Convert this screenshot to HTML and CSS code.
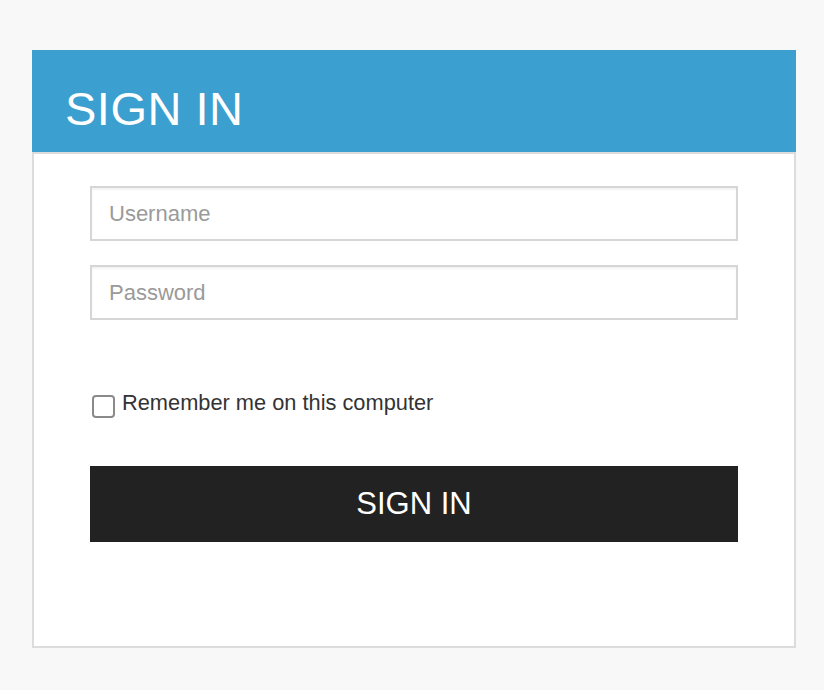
FILE: index.html
```html
<!DOCTYPE html>
<html>
<head>
<meta charset="utf-8">
<link rel="stylesheet" href="styles.css">
</head>
<body>
<div class="card">
  <div class="card-header"><h1 class="title">SIGN IN</h1></div>
  <form class="card-body">
    <input class="field" type="text" placeholder="Username">
    <input class="field" type="password" placeholder="Password">
    <label class="remember"><input class="check" type="checkbox"><span>Remember me on this computer</span></label>
    <button class="submit" type="button">SIGN IN</button>
  </form>
</div>
</body>
</html>
```
FILE: styles.css
```css
html, body {
  margin: 0;
  padding: 0;
}
body {
  background: #f8f8f8;
  font-family: "Liberation Sans", Arial, sans-serif;
  padding: 50px 0 0 32px;
}
.card {
  width: 764px;
}
.card-header {
  background: #3b9fd0;
  padding: 35px 33px 20px;
}
.title {
  margin: 0;
  font-size: 47px;
  line-height: 47px;
  letter-spacing: 0.5px;
  font-weight: normal;
  color: #fff;
}
.card-body {
  background: #fff;
  border: 2px solid #dcdcdc;
  padding: 32px 56px 104px;
  display: flex;
  flex-direction: column;
  margin: 0;
}
.field {
  box-sizing: border-box;
  height: 55px;
  border: 2px solid #d6d6d6;
  box-shadow: inset 0 2px 2px rgba(0,0,0,0.05);
  padding: 0 17px;
  font-family: "Liberation Sans", Arial, sans-serif;
  font-size: 22px;
  color: #333;
  outline: none;
  margin: 0 0 24px;
}
.field::placeholder {
  color: #9a9a9a;
}
.remember {
  display: flex;
  align-items: flex-start;
  gap: 7px;
  margin-top: 46px;
  font-size: 21.8px;
  line-height: 25px;
  color: #333;
  height: 28px;
}
.check {
  appearance: none;
  -webkit-appearance: none;
  box-sizing: border-box;
  width: 23px;
  height: 23px;
  margin: 5px 0 0 2px;
  border: 2px solid #8a8a8a;
  border-radius: 4px;
  background: #fff;
  flex: none;
}
.submit {
  margin-top: 48px;
  height: 76px;
  border: none;
  background: #222;
  color: #fff;
  font-family: "Liberation Sans", Arial, sans-serif;
  font-size: 31px;
  padding: 0;
}
```
